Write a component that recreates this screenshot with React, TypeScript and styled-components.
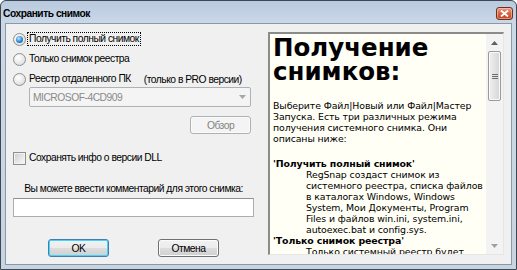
import React from 'react';
import styled, { createGlobalStyle } from 'styled-components';

const GlobalStyle = createGlobalStyle`
  html, body {
    margin: 0;
    padding: 0;
    background: #ffffff;
  }
  body {
    width: 517px;
    height: 270px;
    overflow: hidden;
  }
`;

const Window = styled.div`
  box-sizing: border-box;
  width: 517px;
  height: 270px;
  display: flex;
  flex-direction: column;
  border: 1px solid #3d4854;
  border-radius: 6px 6px 0 0;
  background: linear-gradient(#b9cadf, #cad8e7 22px, #c8d4e0);
  padding: 0 4px 4px 4px;
  font-family: 'Liberation Sans', Arial, sans-serif;
  font-size: 10.3px;
  letter-spacing: -0.5px;
  color: #000;
`;

const TitleBar = styled.div`
  height: 22px;
  flex: none;
  display: flex;
  align-items: center;
  justify-content: space-between;
`;

const Title = styled.div`
  margin-left: -2px;
  margin-top: 2px;
  font-weight: bold;
  font-size: 10.2px;
  letter-spacing: -0.45px;
`;

const CloseButton = styled.div`
  box-sizing: border-box;
  width: 17px;
  height: 13px;
  margin-top: 3px;
  margin-right: -1px;
  display: flex;
  align-items: center;
  justify-content: center;
  border: 1px solid #6b2e20;
  border-radius: 3px;
  background: linear-gradient(#e8a08a, #d5643f 50%, #c2461f);
  box-shadow: inset 0 0 0 1px rgba(255, 220, 200, 0.5);
`;

const Client = styled.div`
  flex: 1;
  display: flex;
  gap: 14px;
  background: #f0f0f0;
  border: 1px solid #8799ab;
  padding: 8px 7px 9px 7px;
  min-height: 0;
`;

const LeftColumn = styled.div`
  width: 241px;
  display: flex;
  flex-direction: column;

  & > * {
    flex: none;
  }
`;

const OptionRow = styled.label<{ $top: number }>`
  height: 14px;
  margin-top: ${(p) => p.$top}px;
  display: flex;
  align-items: center;
  white-space: nowrap;
`;

const Radio = styled.span<{ $checked?: boolean }>`
  box-sizing: border-box;
  position: relative;
  width: 13px;
  height: 13px;
  flex: none;
  border-radius: 50%;
  border: 1px solid #8e8f8f;
  background: radial-gradient(circle at 40% 35%, #ffffff, #e6e6e6 60%, #cfcfcf);
  margin-right: 2px;

  &::after {
    content: '';
    display: ${(p) => (p.$checked ? 'block' : 'none')};
    position: absolute;
    left: 2px;
    top: 2px;
    width: 7px;
    height: 7px;
    border-radius: 50%;
    background: radial-gradient(circle at 40% 35%, #bfe6ff, #2b86d6 55%, #0d4f96);
  }
`;

const Checkbox = styled.span`
  box-sizing: border-box;
  width: 13px;
  height: 13px;
  flex: none;
  border: 1px solid #8e8f8f;
  background: linear-gradient(135deg, #c9ccd1, #eeeeee 70%, #f7f7f7);
  box-shadow: inset 0 0 0 1px #f2f2f2;
  margin-right: 2px;
`;

const OptionText = styled.span<{ $focused?: boolean }>`
  padding: 0 1px;
  line-height: 12px;
  outline: ${(p) => (p.$focused ? '1px dotted #000' : 'none')};
  outline-offset: 0;
`;

const ProNote = styled.span`
  margin-left: 12px;
`;

const Combo = styled.div`
  box-sizing: border-box;
  height: 20px;
  margin: 1px 3px 0 16px;
  display: flex;
  align-items: center;
  justify-content: space-between;
  border: 1px solid #adb2b5;
  border-radius: 2px;
  background: #f4f4f4;
  color: #8a8a8a;
  padding: 0 4px 0 3px;
`;

const ButtonRow = styled.div<{ $top: number; $align: string }>`
  display: flex;
  justify-content: ${(p) => p.$align};
  gap: 49px;
  margin-top: ${(p) => p.$top}px;
`;

const Button = styled.div<{ $disabled?: boolean; $default?: boolean }>`
  box-sizing: border-box;
  width: 61px;
  height: 18px;
  display: flex;
  align-items: center;
  justify-content: center;
  border-radius: 3px;
  border: 1px solid
    ${(p) => (p.$disabled ? '#adb2b5' : p.$default ? '#3c7fb1' : '#707070')};
  background: ${(p) =>
    p.$disabled
      ? '#f4f4f4'
      : 'linear-gradient(#f2f2f2, #ebebeb 50%, #dddddd 51%, #cfcfcf)'};
  box-shadow: ${(p) =>
    p.$default ? 'inset 0 0 0 1px #48d4f8' : 'inset 0 0 0 1px #fbfbfb'};
  color: ${(p) => (p.$disabled ? '#838383' : '#000')};
  margin-right: ${(p) => (p.$disabled ? '3px' : '0')};
`;

const Caption = styled.div`
  margin-top: 17px;
  line-height: 14px;
  text-align: center;
  white-space: nowrap;
`;

const TextInput = styled.div`
  box-sizing: border-box;
  height: 19px;
  margin-top: 2px;
  border: 1px solid #abadb3;
  border-top-color: #8e9094;
  background: #ffffff;
`;

const HelpPanel = styled.div`
  box-sizing: border-box;
  width: 236px;
  display: flex;
  border-style: solid;
  border-width: 2px 1px 1px 2px;
  border-color: #8b8b8b #e6e6e6 #e6e6e6 #8b8b8b;
  background: #fffff6;
  min-height: 0;
`;

const HelpContent = styled.div`
  flex: 1;
  overflow: hidden;
  padding: 2px 0 0 3px;
  font-family: 'DejaVu Sans', Verdana, sans-serif;
  font-size: 9.4px;
  letter-spacing: -0.1px;
  line-height: 11px;
  color: #000;
  white-space: nowrap;
`;

const Heading = styled.h1`
  margin: 0;
  font-size: 24.5px;
  line-height: 24px;
  letter-spacing: 0;
  font-weight: bold;
`;

const Paragraph = styled.p`
  margin: 16px 0 0 0;
`;

const Term = styled.div<{ $top: number }>`
  margin-top: ${(p) => p.$top}px;
  font-weight: bold;
`;

const Definition = styled.div`
  padding-left: 33px;
`;

const ScrollBar = styled.div`
  width: 17px;
  flex: none;
  display: flex;
  flex-direction: column;
  align-items: center;
  background: #f3f3f3;
`;

const Arrow = styled.div<{ $down?: boolean }>`
  height: 17px;
  display: flex;
  align-items: center;
  justify-content: center;
  margin-top: ${(p) => (p.$down ? 'auto' : '0')};
`;

const Thumb = styled.div`
  box-sizing: border-box;
  width: 13px;
  height: 50px;
  display: flex;
  flex-direction: column;
  align-items: center;
  justify-content: center;
  gap: 1px;
  border: 1px solid #9a9a9a;
  border-radius: 2px;
  background: linear-gradient(90deg, #f0f0f0, #e3e3e3 50%, #d6d6d6);
  box-shadow: inset 0 0 0 1px #fafafa;
`;

const Grip = styled.span`
  width: 6px;
  height: 1px;
  background: #6d6d6d;
`;

const Triangle = ({ down, color }: { down?: boolean; color: string }) => (
  <svg width="7" height="4" viewBox="0 0 7 4">
    <path d={down ? 'M0 0 H7 L3.5 4 Z' : 'M0 4 H7 L3.5 0 Z'} fill={color} />
  </svg>
);

export default function App() {
  return (
    <>
      <GlobalStyle />
      <Window>
        <TitleBar>
          <Title>Сохранить снимок</Title>
          <CloseButton>
            <svg width="9" height="7" viewBox="0 0 9 7">
              <path
                d="M1 0.5 L8 6.5 M8 0.5 L1 6.5"
                stroke="#ffffff"
                strokeWidth="1.8"
              />
            </svg>
          </CloseButton>
        </TitleBar>
        <Client>
          <LeftColumn>
            <OptionRow $top={0}>
              <Radio $checked />
              <OptionText $focused>Получить полный снимок</OptionText>
            </OptionRow>
            <OptionRow $top={6}>
              <Radio />
              <OptionText>Только снимок реестра</OptionText>
            </OptionRow>
            <OptionRow $top={6}>
              <Radio />
              <OptionText>Реестр отдаленного ПК</OptionText>
              <ProNote>(только в PRO версии)</ProNote>
            </OptionRow>
            <Combo>
              <span>MICROSOF-4CD909</span>
              <Triangle down color="#a6a6a6" />
            </Combo>
            <ButtonRow $top={9} $align="flex-end">
              <Button $disabled>Обзор</Button>
            </ButtonRow>
            <OptionRow $top={17}>
              <Checkbox />
              <OptionText>Сохранять инфо о версии DLL</OptionText>
            </OptionRow>
            <Caption>Вы можете ввести комментарий для этого снимка:</Caption>
            <TextInput />
            <ButtonRow $top={22} $align="center">
              <Button $default>OK</Button>
              <Button>Отмена</Button>
            </ButtonRow>
          </LeftColumn>
          <HelpPanel>
            <HelpContent>
              <Heading>
                Получение
                <br />
                снимков:
              </Heading>
              <Paragraph>
                Выберите Файл|Новый или Файл|Мастер
                <br />
                Запуска. Есть три различных режима
                <br />
                получения системного снимка. Они
                <br />
                описаны ниже:
              </Paragraph>
              <Term $top={14}>'Получить полный снимок'</Term>
              <Definition>
                RegSnap создаст снимок из
                <br />
                системного реестра, списка файлов
                <br />
                в каталогах Windows, Windows
                <br />
                System, Мои Документы, Program
                <br />
                Files и файлов win.ini, system.ini,
                <br />
                autoexec.bat и config.sys.
              </Definition>
              <Term $top={0}>'Только снимок реестра'</Term>
              <Definition>Только системный реестр будет</Definition>
            </HelpContent>
            <ScrollBar>
              <Arrow>
                <Triangle color="#606060" />
              </Arrow>
              <Thumb>
                <Grip />
                <Grip />
                <Grip />
              </Thumb>
              <Arrow $down>
                <Triangle down color="#a0a0a0" />
              </Arrow>
            </ScrollBar>
          </HelpPanel>
        </Client>
      </Window>
    </>
  );
}
